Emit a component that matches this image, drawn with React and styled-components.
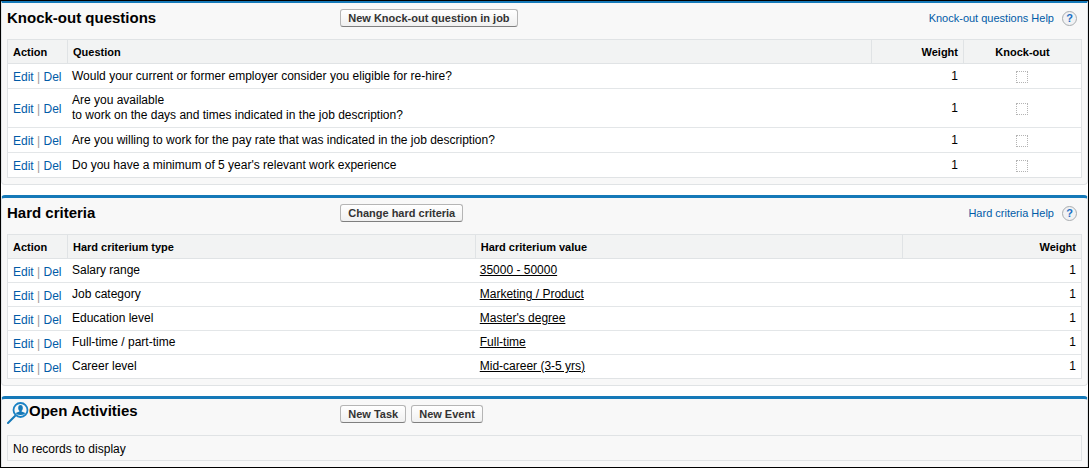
import React from 'react'
import styled, { createGlobalStyle } from 'styled-components'

const GlobalStyle = createGlobalStyle`
  body {
    margin: 0;
    background: #fff;
    color: #000;
    font-family: Arial, 'Liberation Sans', Helvetica, sans-serif;
    font-size: 12px;
  }

  * {
    box-sizing: border-box;
  }
`

const Page = styled.main`
  display: flex;
  flex-direction: column;
  gap: 10px;
  border: 1px solid #000;
`

const Panel = styled.section`
  padding: 0 5px 6px;
  background: #f8f8f8;
  border: 1px solid #e0e3e5;
  border-top: 3px solid #1579b8;
  border-radius: 4px;

  &:first-child {
    border-top-width: 2px;
    border-top-left-radius: 0;
    border-top-right-radius: 0;
  }

  &:last-child {
    border-bottom: 0;
    border-bottom-left-radius: 0;
    border-bottom-right-radius: 0;
  }
`

const PanelHeader = styled.header`
  height: 36px;
  padding-top: 6px;
  display: grid;
  grid-template-columns: 31% 1fr auto;
  align-items: start;
`

const Title = styled.h2`
  margin: 0;
  display: flex;
  align-items: flex-start;
  font-size: 15px;
  line-height: 18px;
  white-space: nowrap;
`

const IconTitle = styled(Title)`
  margin-top: -3px;
`

const Buttons = styled.div`
  display: flex;
  gap: 5px;
`

const Button = styled.button`
  height: 18px;
  padding: 0 7px;
  border: 1px solid #b5b5b5;
  border-bottom-color: #7f7f7f;
  border-radius: 3px;
  background: linear-gradient(#fff, #f0f0f0);
  color: #333;
  font-family: inherit;
  font-size: 11px;
  font-weight: bold;
  line-height: 16px;
  cursor: pointer;
`

const HelpLink = styled.a`
  display: flex;
  align-items: center;
  gap: 8px;
  padding-right: 5px;
  color: #015ba7;
  font-size: 11px;
  line-height: 18px;
  text-decoration: none;
`

const HelpIcon = styled.span`
  width: 15px;
  height: 15px;
  border: 1px solid #a9adb0;
  border-radius: 50%;
  background: #f1f2f4;
  color: #1a6fc4;
  font-size: 11px;
  font-weight: bold;
  line-height: 13px;
  text-align: center;
`

const Table = styled.table`
  width: 100%;
  table-layout: fixed;
  border-collapse: separate;
  border-spacing: 0;
  border: 1px solid #e0e3e5;
  border-bottom: 0;
  background: #fff;
`

const Th = styled.th`
  width: ${props => props.$width || 'auto'};
  height: 24px;
  padding: 0 5px;
  background: #f2f3f3;
  border-bottom: 1px solid #e0e3e5;
  border-left: 1px solid #e0e3e5;
  font-size: 11px;
  line-height: 16px;
  text-align: ${props => props.$align || 'left'};

  &:first-child {
    border-left: 0;
  }
`

const Td = styled.td`
  height: ${props => (props.$tall ? '25px' : '24px')};
  padding: 4px 5px;
  border-bottom: 1px solid #e3e6e8;
  line-height: 15px;
  text-align: ${props => props.$align || 'left'};
  white-space: pre-line;

  tr:last-child > & {
    border-bottom-color: #e0e3e5;
  }
`

const ActionTd = styled(Td)`
  padding: 3px 0 0 5px;
  color: #999;
  white-space: nowrap;
`

const ActionLink = styled.a`
  color: #015ba7;
  text-decoration: none;
`

const ValueLink = styled.a`
  color: #000;
  text-decoration: underline;
`

const CheckBox = styled.input`
  appearance: none;
  display: block;
  width: 12px;
  height: 12px;
  margin: 1px auto 0;
  border: 1px dotted #b4b4b4;
`

const Empty = styled.p`
  margin: 0;
  padding: 4px 5px;
  border: 1px solid #e0e3e5;
  line-height: 18px;
  height: 26px;
`

const questions = [
  'Would your current or former employer consider you eligible for re-hire?',
  'Are you available\nto work on the days and times indicated in the job description?',
  'Are you willing to work for the pay rate that was indicated in the job description?',
  "Do you have a minimum of 5 year's relevant work experience",
]

const criteria = [
  { type: 'Salary range', value: '35000 - 50000' },
  { type: 'Job category', value: 'Marketing / Product' },
  { type: 'Education level', value: "Master's degree" },
  { type: 'Full-time / part-time', value: 'Full-time' },
  { type: 'Career level', value: 'Mid-career (3-5 yrs)' },
]

const Actions = () => (
  <ActionTd>
    <ActionLink href="#edit">Edit</ActionLink> | <ActionLink href="#del">Del</ActionLink>
  </ActionTd>
)

const Help = ({ children }) => (
  <HelpLink href="#help">
    {children}
    <HelpIcon>?</HelpIcon>
  </HelpLink>
)

const SearchPersonIcon = () => (
  <svg width="22" height="23" viewBox="0 0 22 23" fill="none" aria-hidden="true">
    <path d="M1 21L8 14" stroke="#1579b8" strokeWidth="2" strokeLinecap="round" />
    <circle cx="13.5" cy="8" r="7" stroke="#1b82c4" strokeWidth="1.8" />
    <ellipse cx="13.5" cy="6" rx="2.3" ry="2.9" fill="#1579b8" />
    <path d="M12.4 8h2.2v1.6l3.2 1.2v1.4q-4.3 1.6-8.6 0v-1.4l3.2-1.2z" fill="#1579b8" />
  </svg>
)

const App = () => {
  return (
    <>
      <GlobalStyle />
      <Page>
        <Panel>
          <PanelHeader>
            <Title>Knock-out questions</Title>
            <Buttons>
              <Button type="button">New Knock-out question in job</Button>
            </Buttons>
            <Help>Knock-out questions Help</Help>
          </PanelHeader>
          <Table>
            <thead>
              <tr>
                <Th $width="59px">Action</Th>
                <Th>Question</Th>
                <Th $width="92px" $align="right">Weight</Th>
                <Th $width="118px" $align="center">Knock-out</Th>
              </tr>
            </thead>
            <tbody>
              {questions.map(question => (
                <tr key={question}>
                  <Actions />
                  <Td $tall>{question}</Td>
                  <Td $tall $align="right">1</Td>
                  <Td $tall>
                    <CheckBox type="checkbox" disabled aria-label={`Knock-out: ${question}`} />
                  </Td>
                </tr>
              ))}
            </tbody>
          </Table>
        </Panel>

        <Panel>
          <PanelHeader>
            <Title>Hard criteria</Title>
            <Buttons>
              <Button type="button">Change hard criteria</Button>
            </Buttons>
            <Help>Hard criteria Help</Help>
          </PanelHeader>
          <Table>
            <thead>
              <tr>
                <Th $width="59px">Action</Th>
                <Th $width="38%">Hard criterium type</Th>
                <Th>Hard criterium value</Th>
                <Th $width="179px" $align="right">Weight</Th>
              </tr>
            </thead>
            <tbody>
              {criteria.map(({ type, value }) => (
                <tr key={type}>
                  <Actions />
                  <Td>{type}</Td>
                  <Td>
                    <ValueLink href="#value">{value}</ValueLink>
                  </Td>
                  <Td $align="right">1</Td>
                </tr>
              ))}
            </tbody>
          </Table>
        </Panel>

        <Panel>
          <PanelHeader>
            <IconTitle>
              <SearchPersonIcon />
              Open Activities
            </IconTitle>
            <Buttons>
              <Button type="button">New Task</Button>
              <Button type="button">New Event</Button>
            </Buttons>
          </PanelHeader>
          <Empty>No records to display</Empty>
        </Panel>
      </Page>
    </>
  )
}

export default App
